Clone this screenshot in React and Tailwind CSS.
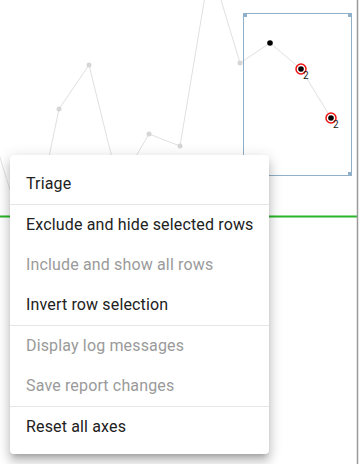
import React from "react";

const items = [
  { label: "Triage", divider: true },
  { label: "Exclude and hide selected rows" },
  { label: "Include and show all rows", disabled: true },
  { label: "Invert row selection", divider: true },
  { label: "Display log messages", disabled: true },
  { label: "Save report changes", disabled: true, divider: true },
  { label: "Reset all axes" },
];

const greyPts = [
  [59, 109],
  [89, 65],
  [149, 134],
  [180, 146],
  [240, 63],
];

const Chart = () => (
  <svg className="absolute inset-0" width="364" height="464" viewBox="0 0 364 464">
    {/* trace */}
    <polyline points="-6,138 10,190" fill="none" stroke="#e3e3e3" strokeWidth="1" />
    <polyline points="40,200 59,109 89,65 115,170" fill="none" stroke="#e0e0e0" strokeWidth="1" />
    <polyline points="128,170 149,134 180,146 206,-10" fill="none" stroke="#e0e0e0" strokeWidth="1" />
    <polyline
      points="218,-10 240,63 270,43 301,69 331,118"
      fill="none"
      stroke="#e0e0e0"
      strokeWidth="1"
    />
    {greyPts.map(([x, y]) => (
      <circle key={x} cx={x} cy={y} r="2.5" fill="#d6d6d6" />
    ))}

    {/* green baseline + right axis */}
    <line x1="0" y1="216.5" x2="357" y2="216.5" stroke="#2ab62a" strokeWidth="2" />
    <line x1="357.5" y1="0" x2="357.5" y2="464" stroke="#9a9a9a" strokeWidth="1.5" />

    {/* selection box */}
    <rect x="243.5" y="13.5" width="108" height="162" fill="none" stroke="#8fb0c8" strokeWidth="1" />
    <rect x="243" y="13" width="4" height="4" fill="#8fb0c8" />
    <rect x="348" y="13" width="4" height="4" fill="#8fb0c8" />
    <rect x="243" y="172" width="4" height="4" fill="#8fb0c8" />
    <rect x="348" y="172" width="4" height="4" fill="#8fb0c8" />

    {/* selected points */}
    <circle cx="270" cy="43" r="2.8" fill="#000" />
    <circle cx="301" cy="69" r="5" fill="none" stroke="#f01010" strokeWidth="1.5" />
    <circle cx="301" cy="69" r="2.8" fill="#000" />
    <circle cx="331" cy="118" r="5" fill="none" stroke="#f01010" strokeWidth="1.5" />
    <circle cx="331" cy="118" r="2.8" fill="#000" />
    <text x="303" y="79" fontSize="10" fill="#222" fontFamily="Roboto, sans-serif">2</text>
    <text x="333" y="128" fontSize="10" fill="#222" fontFamily="Roboto, sans-serif">2</text>
  </svg>
);

export default function App() {
  return (
    <div className="relative w-[364px] h-[464px] bg-white overflow-hidden font-['Roboto',sans-serif]">
      <Chart />
      <div className="absolute left-[10px] top-[155px] w-[259px] bg-white rounded-[4px] pt-[9px] pb-[7px] shadow-[0_5px_5px_-3px_rgba(0,0,0,0.2),0_8px_10px_1px_rgba(0,0,0,0.14),0_3px_14px_2px_rgba(0,0,0,0.12)]">
        {items.map((it) => (
          <div key={it.label} className={it.divider ? "border-b border-[#e6e6e6]" : ""}>
            <div
              className={
                "h-10 flex items-center px-4 text-base whitespace-nowrap tracking-[0.15px] " +
                (it.disabled ? "text-[#9a9a9a]" : "text-[#212121]")
              }
            >
              {it.label}
            </div>
          </div>
        ))}
      </div>
    </div>
  );
}
